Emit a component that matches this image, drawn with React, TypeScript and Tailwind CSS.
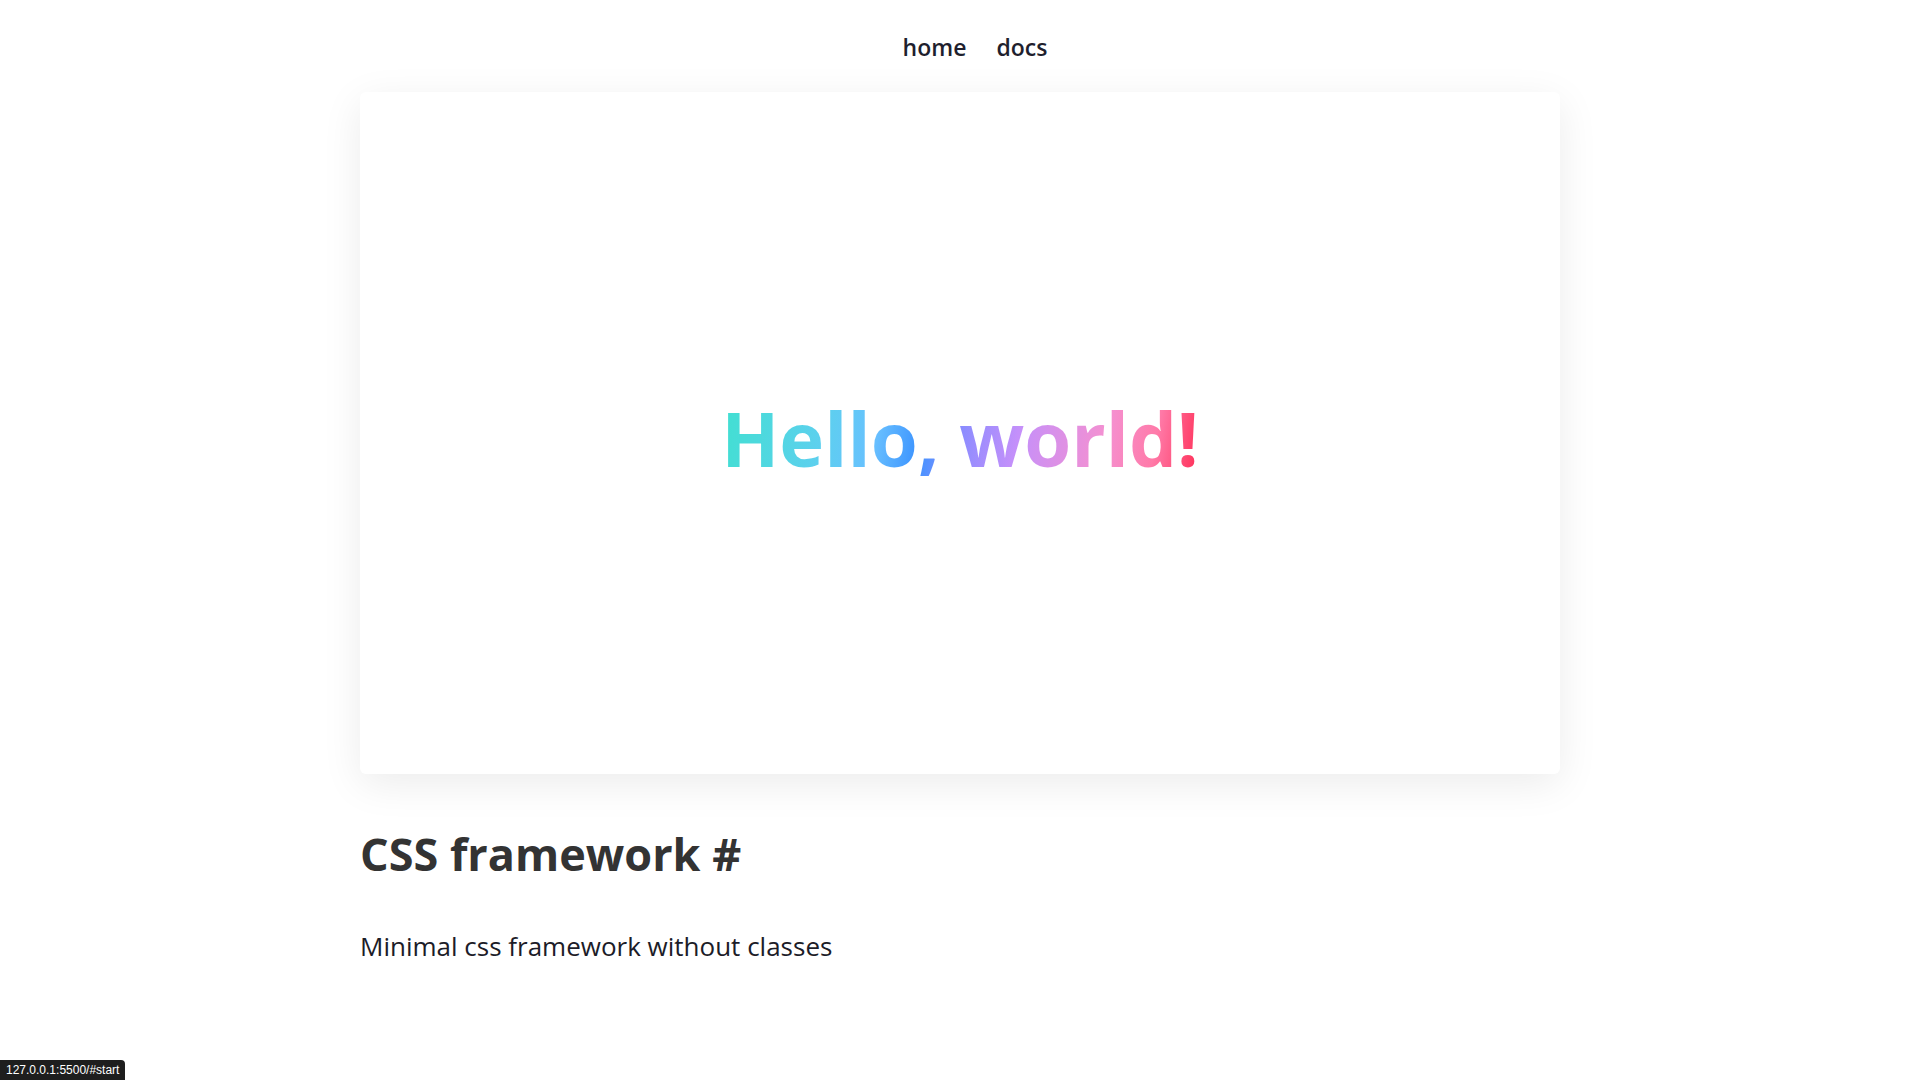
import React from 'react';

const font = { fontFamily: '"Open Sans", "Noto Sans", sans-serif' };

export default function App() {
    return (
        <div className="relative min-h-[1080px] bg-white text-[#222]" style={font}>
            <nav className="flex justify-center gap-[30px] pt-[30px] pl-[30px] h-[92px]">
                <a href="#" className="text-[23px] leading-[34px] font-semibold text-[#1f1f2e]">home</a>
                <a href="#" className="text-[23px] leading-[34px] font-semibold text-[#1f1f2e]">docs</a>
            </nav>

            <main className="w-[1200px] mx-auto">
                <section className="h-[682px] rounded-[6px] bg-white shadow-[0_10px_40px_rgba(0,0,0,0.08)] flex items-center justify-center">
                    <h1 className="text-[76px] font-bold leading-none pt-[10px] bg-[linear-gradient(100deg,#40e0d0_0%,#5dd0ee_22%,#68c0ff_33%,#3d94ff_42%,#8a8cff_50%,#c590fa_62%,#f590d0_80%,#ff7aa8_90%,#ff2d55_100%)] bg-clip-text text-transparent">
                        Hello, world!
                    </h1>
                </section>

                <h2 className="mt-[50px] text-[45px] font-bold leading-[60px] text-[#333]">
                    CSS framework <a href="#start" className="text-[#333]">#</a>
                </h2>
                <p className="mt-[42px] text-[26px] leading-[40px] text-[#1c1c28]">
                    Minimal css framework without classes
                </p>
            </main>

            <div className="absolute left-0 bottom-0 h-[20px] px-[6px] bg-[#1e1e1e] rounded-tr-[4px] flex items-center text-[12px] text-white" style={{ fontFamily: '"Liberation Sans", sans-serif' }}>
                127.0.0.1:5500/#start
            </div>
        </div>
    );
}
